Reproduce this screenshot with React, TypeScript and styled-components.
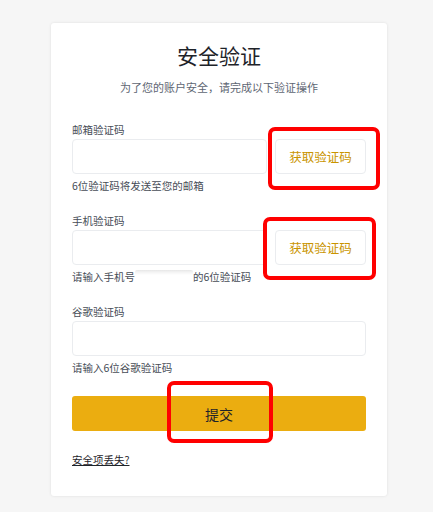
import React from "react";
import styled, { createGlobalStyle } from "styled-components";

const Global = createGlobalStyle`
  html, body { margin: 0; padding: 0; background: #f6f6f6; }
  body { font-family: "Noto Sans CJK SC", "Noto Sans", sans-serif; }
  * { box-sizing: border-box; }
`;

const Page = styled.div`
  width: 433px;
  height: 512px;
  padding: 23px 0 0 51px;
`;

const Card = styled.div`
  position: relative;
  width: 336px;
  background: #ffffff;
  border-radius: 3px;
  box-shadow: 0 0 3px rgba(0, 0, 0, 0.1);
  padding: 17px 21px 28px;
  display: flex;
  flex-direction: column;
`;

const Title = styled.h1`
  margin: 0;
  font-size: 21px;
  line-height: 30px;
  font-weight: 400;
  color: #1e2329;
  text-align: center;
`;

const Subtitle = styled.p`
  margin: 9px 0 0;
  font-size: 11px;
  line-height: 16px;
  color: #5e6673;
  text-align: center;
`;

const Field = styled.div<{ $first?: boolean }>`
  margin-top: ${(p) => (p.$first ? "27px" : "19px")};
  display: flex;
  flex-direction: column;
`;

const Label = styled.label`
  font-size: 10.5px;
  line-height: 16px;
  color: #474d57;
  margin-bottom: 1px;
`;

const Row = styled.div`
  display: flex;
  gap: 8px;
`;

const Input = styled.div`
  flex: 1;
  height: 35px;
  border: 1px solid #eaecef;
  border-radius: 4px;
  background: #fff;
`;

const CodeButton = styled.div`
  width: 91px;
  height: 35px;
  border: 1px solid #eaecef;
  border-radius: 4px;
  display: flex;
  align-items: center;
  justify-content: center;
  font-size: 12.5px;
  color: #c99400;
`;

const Helper = styled.div`
  margin-top: 4px;
  font-size: 10.5px;
  line-height: 16px;
  color: #474d57;
  white-space: nowrap;
  display: flex;
  align-items: center;
`;

const Redact = styled.span<{ $w: number }>`
  display: inline-block;
  width: ${(p) => p.$w}px;
  height: 14px;
  background: linear-gradient(#e6e6e6 0, #f3f3f3 2px, #ffffff 5px);
  border-radius: 2px;
`;

const Submit = styled.button`
  margin-top: 20px;
  height: 35px;
  border: none;
  border-radius: 3px;
  background: #ebad10;
  font-family: inherit;
  font-size: 14px;
  color: #1e2329;
  display: flex;
  align-items: center;
  justify-content: center;
`;

const LostLink = styled.a`
  margin-top: 21px;
  font-size: 10.5px;
  line-height: 16px;
  color: #1e2329;
  text-decoration: underline;
  align-self: flex-start;
`;

const Mark = styled.div<{ $l: number; $t: number; $w: number; $h: number }>`
  position: absolute;
  left: ${(p) => p.$l}px;
  top: ${(p) => p.$t}px;
  width: ${(p) => p.$w}px;
  height: ${(p) => p.$h}px;
  border: 4px solid #ff0000;
  border-radius: 7px;
  pointer-events: none;
`;

export default function App() {
  return (
    <>
      <Global />
      <Page>
        <Card>
          <Title>安全验证</Title>
          <Subtitle>为了您的账户安全，请完成以下验证操作</Subtitle>

          <Field $first>
            <Label>邮箱验证码</Label>
            <Row>
              <Input />
              <CodeButton>获取验证码</CodeButton>
            </Row>
            <Helper>6位验证码将发送至您的邮箱</Helper>
          </Field>

          <Field>
            <Label>手机验证码</Label>
            <Row>
              <Input />
              <CodeButton>获取验证码</CodeButton>
            </Row>
            <Helper>
              请输入手机号<Redact $w={58} />的6位验证码
            </Helper>
          </Field>

          <Field>
            <Label>谷歌验证码</Label>
            <Row>
              <Input />
            </Row>
            <Helper>请输入6位谷歌验证码</Helper>
          </Field>

          <Submit>提交</Submit>
          <LostLink>安全项丢失?</LostLink>

          <Mark $l={217} $t={104} $w={112} $h={63} />
          <Mark $l={212} $t={194} $w={113} $h={63} />
          <Mark $l={116} $t={358} $w={106} $h={62} />
        </Card>
      </Page>
    </>
  );
}
